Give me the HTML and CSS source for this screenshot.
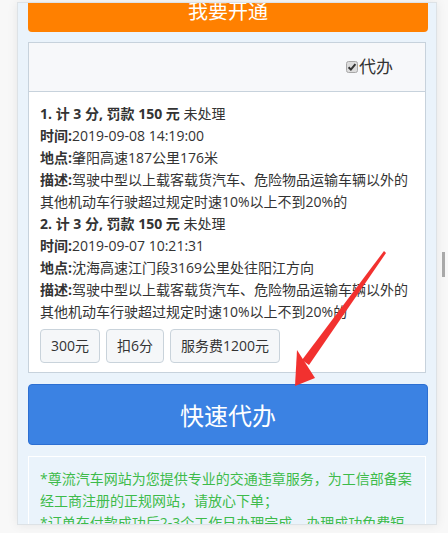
FILE: index.html
```html
<!DOCTYPE html>
<html lang="zh">
<head>
<meta charset="utf-8">
<link rel="stylesheet" href="styles.css">
</head>
<body>
<div class="panel">
  <div class="open-btn">我要开通</div>
  <div class="card">
    <div class="card-head">
      <label class="agent">
        <svg class="check" width="12" height="12" viewBox="0 0 12 12"><rect x="0.5" y="0.5" width="11" height="11" rx="2" fill="#dcdcdc" stroke="#a8a8a8"/><path d="M2.6 6.2 L4.9 8.6 L9.4 3.2" fill="none" stroke="#333" stroke-width="2"/></svg>代办
      </label>
    </div>
    <div class="card-body">
      <div class="line"><b>1. 计 3 分, 罚款 150 元</b> 未处理</div>
      <div class="line"><b>时间:</b>2019-09-08 14:19:00</div>
      <div class="line"><b>地点:</b>肇阳高速187公里176米</div>
      <div class="line"><b>描述:</b>驾驶中型以上载客载货汽车、危险物品运输车辆以外的其他机动车行驶超过规定时速10%以上不到20%的</div>
      <div class="line"><b>2. 计 3 分, 罚款 150 元</b> 未处理</div>
      <div class="line"><b>时间:</b>2019-09-07 10:21:31</div>
      <div class="line"><b>地点:</b>沈海高速江门段3169公里处往阳江方向</div>
      <div class="line"><b>描述:</b>驾驶中型以上载客载货汽车、危险物品运输车辆以外的其他机动车行驶超过规定时速10%以上不到20%的</div>
      <div class="tags">
        <span class="tag">300元</span>
        <span class="tag">扣6分</span>
        <span class="tag">服务费1200元</span>
      </div>
    </div>
  </div>
  <div class="fast-btn">快速代办</div>
  <div class="notice">
    <p>*尊流汽车网站为您提供专业的交通违章服务，为工信部备案经工商注册的正规网站，请放心下单；</p>
    <p>*订单在付款成功后2-3个工作日办理完成，办理成功免费短信通知。</p>
  </div>
</div>
<div class="scroll-grip"></div>
<svg class="arrow" width="448" height="533" viewBox="0 0 448 533">
  <polygon points="384,251 386,253 309,365 302,360" fill="#f2312f"/>
  <polygon points="295,386 297,350 315,378" fill="#f2312f"/>
</svg>
</body>
</html>
```

FILE: styles.css
```css
* { box-sizing: border-box; }
html, body {
  margin: 0;
  width: 448px;
  height: 533px;
  overflow: hidden;
}
body {
  background: #f8f8f8;
  font-family: "Open Sans", "Noto Sans CJK SC", sans-serif;
  color: #333;
  position: relative;
}
.panel {
  margin: 2px 0 0 17px;
  width: 420px;
  height: 523px;
  background: #eaf3fb;
  border: 1px solid #dde2e6;
  box-shadow: 0 0 10px rgba(0,0,0,0.08);
  padding: 0 8px 0 10px;
  overflow: hidden;
}
.open-btn {
  height: 29px;
  background: #ff8000;
  color: #fff;
  font-size: 20px;
  line-height: 18px;
  text-align: center;
  border-radius: 0 0 4px 4px;
}
.card {
  margin-top: 10px;
  width: 398px;
  border: 1px solid #c7d2dc;
  background: #fff;
}
.card-head {
  height: 49px;
  background: #f7f8fa;
  border-bottom: 1px solid #c7d2dc;
  display: flex;
  align-items: center;
  justify-content: flex-end;
  padding-right: 32px;
}
.agent {
  display: flex;
  align-items: center;
  font-size: 17px;
  line-height: 20px;
  color: #333;
}
.check { margin-right: 1px; }
.card-body {
  padding: 11px 11px 9px;
  font-size: 14px;
  line-height: 22px;
}
.line b { font-weight: bold; }
.tags {
  display: flex;
  gap: 6px;
  margin-top: 6px;
}
.tag {
  height: 34px;
  padding: 0 10px;
  display: flex;
  align-items: center;
  background: #f5f7f9;
  border: 1px solid #c9d3db;
  border-radius: 4px;
  font-size: 14px;
  color: #333;
}
.fast-btn {
  margin-top: 11px;
  height: 61px;
  background: #3b82e3;
  border: 1px solid #2c6fd2;
  border-radius: 4px;
  color: #fff;
  font-size: 24px;
  display: flex;
  align-items: center;
  justify-content: center;
}
.notice {
  margin-top: 11px;
  width: 398px;
  border: 1px solid #fff;
  padding: 11px 11px;
  color: #3dbb4a;
  font-size: 14px;
  line-height: 22px;
}
.notice p { margin: 0; }
.scroll-grip {
  position: absolute;
  left: 442px;
  top: 252px;
  width: 3px;
  height: 25px;
  background: #a9a9a9;
}
.arrow {
  position: absolute;
  left: 0;
  top: 0;
  pointer-events: none;
}
```
